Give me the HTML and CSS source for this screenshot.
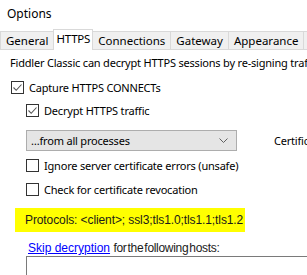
FILE: index.html
```html
<!DOCTYPE html>
<html lang="en">
<head>
    <meta charset="UTF-8">
    <title>Options</title>
    <link rel="stylesheet" href="styles.css">
</head>
<body>
    <div class="title">Options</div>

    <div class="tabs">
        <div class="tab">General</div>
        <div class="tab selected">HTTPS</div>
        <div class="tab">Connections</div>
        <div class="tab">Gateway</div>
        <div class="tab">Appearance</div>
        <div class="tab">Scripting</div>
    </div>

    <div class="panel">
        <div class="intro">Fiddler Classic can decrypt HTTPS sessions by re-signing traffic using self-generated certificates.</div>

        <label class="check-row first">
            <span class="box"><svg viewBox="0 0 11 11" width="11" height="11"><path d="M1.5 5.5 L4.2 8.3 L9.5 2.5" fill="none" stroke="#555" stroke-width="1.1"/></svg></span>
            Capture HTTPS CONNECTs
        </label>

        <div class="indent">
            <label class="check-row">
                <span class="box"><svg viewBox="0 0 11 11" width="11" height="11"><path d="M1.5 5.5 L4.2 8.3 L9.5 2.5" fill="none" stroke="#555" stroke-width="1.1"/></svg></span>
                Decrypt HTTPS traffic
            </label>

            <div class="select-row">
                <div class="select">
                    <span>&hellip;from all processes</span>
                    <svg class="chevron" viewBox="0 0 9 5" width="9" height="5"><path d="M0.5 0.5 L4.5 4.5 L8.5 0.5" fill="none" stroke="#606060" stroke-width="1"/></svg>
                </div>
                <span class="cert">Certificates generated by CertEnroll</span>
            </div>

            <label class="check-row tall">
                <span class="box"></span>
                Ignore server certificate errors (unsafe)
            </label>

            <label class="check-row tall">
                <span class="box"></span>
                Check for certificate revocation
            </label>
        </div>

        <div class="protocols">Protocols: &lt;client&gt;; ssl3;tls1.0;tls1.1;tls1.2</div>

        <div class="skip"><a href="#">Skip decryption</a> <span class="rest">for the following hosts:</span></div>
        <div class="hosts"></div>
    </div>
</body>
</html>
```

FILE: styles.css
```css
body {
    margin: 0;
    background: #ffffff;
    font-family: "Noto Sans", sans-serif;
    font-size: 11px;
    letter-spacing: -0.2px;
    color: #000000;
    overflow: hidden;
    width: 307px;
    height: 275px;
}
.title {
    padding: 5px 0 0 7px;
    height: 24px;
    font-size: 12px;
    letter-spacing: 0;
}
.tabs {
    display: flex;
    align-items: flex-end;
    height: 21px;
    white-space: nowrap;
    overflow: hidden;
    font-size: 11.5px;
    letter-spacing: 0;
}
.tab {
    height: 17px;
    line-height: 17px;
    padding: 0 5px;
    background: #f0f0f0;
    border: 1px solid #d9d9d9;
    border-right: none;
    flex-shrink: 0;
}
.tab.selected {
    height: 20px;
    line-height: 18px;
    background: #ffffff;
    border-right: 1px solid #d9d9d9;
    border-bottom-color: #ffffff;
    margin-bottom: -1px;
    padding: 0 2px;
    letter-spacing: -0.2px;
}
.tab.selected + .tab {
    border-left: none;
}
.panel {
    padding: 4px 0 0 10px;
    white-space: nowrap;
    overflow: hidden;
}
.intro {
    height: 18px;
    line-height: 18px;
}
.check-row {
    display: flex;
    align-items: center;
    gap: 5px;
    height: 23px;
}
.check-row.first {
    margin: 4px 0 0 1px;
}
.check-row.tall {
    height: 24px;
}
.box {
    width: 11px;
    height: 11px;
    border: 1px solid #333333;
    background: #ffffff;
    display: flex;
    align-items: center;
    justify-content: center;
    flex-shrink: 0;
}
.indent {
    padding-left: 16px;
}
.select-row {
    display: flex;
    align-items: center;
    gap: 37px;
    margin: 8px 0 2px;
}
.select {
    width: 200px;
    height: 19px;
    display: flex;
    align-items: center;
    justify-content: space-between;
    padding: 0 5px 0 4px;
    background: #e5e5e5;
    border: 1px solid #adadad;
    flex-shrink: 0;
}
.chevron {
    margin-right: 3px;
}
.protocols {
    margin: 7px 0 0 5px;
    width: 220px;
    height: 24px;
    line-height: 25px;
    padding-left: 10px;
    background: #ffff00;
    font-family: "Liberation Sans", sans-serif;
    font-size: 12px;
    letter-spacing: -0.1px;
    color: #1a1a1a;
}
.skip {
    margin: 9px 0 0 18px;
    font-family: "Liberation Sans", sans-serif;
    font-size: 12px;
    letter-spacing: 0;
    height: 15px;
    line-height: 15px;
}
.skip a {
    color: #0000ff;
}
.skip .rest {
    letter-spacing: -0.3px;
    word-spacing: -2px;
    color: #1a1a1a;
}
.hosts {
    margin-left: 16px;
    height: 30px;
    border: 1px solid #7a7a7a;
    border-right: none;
}
```
